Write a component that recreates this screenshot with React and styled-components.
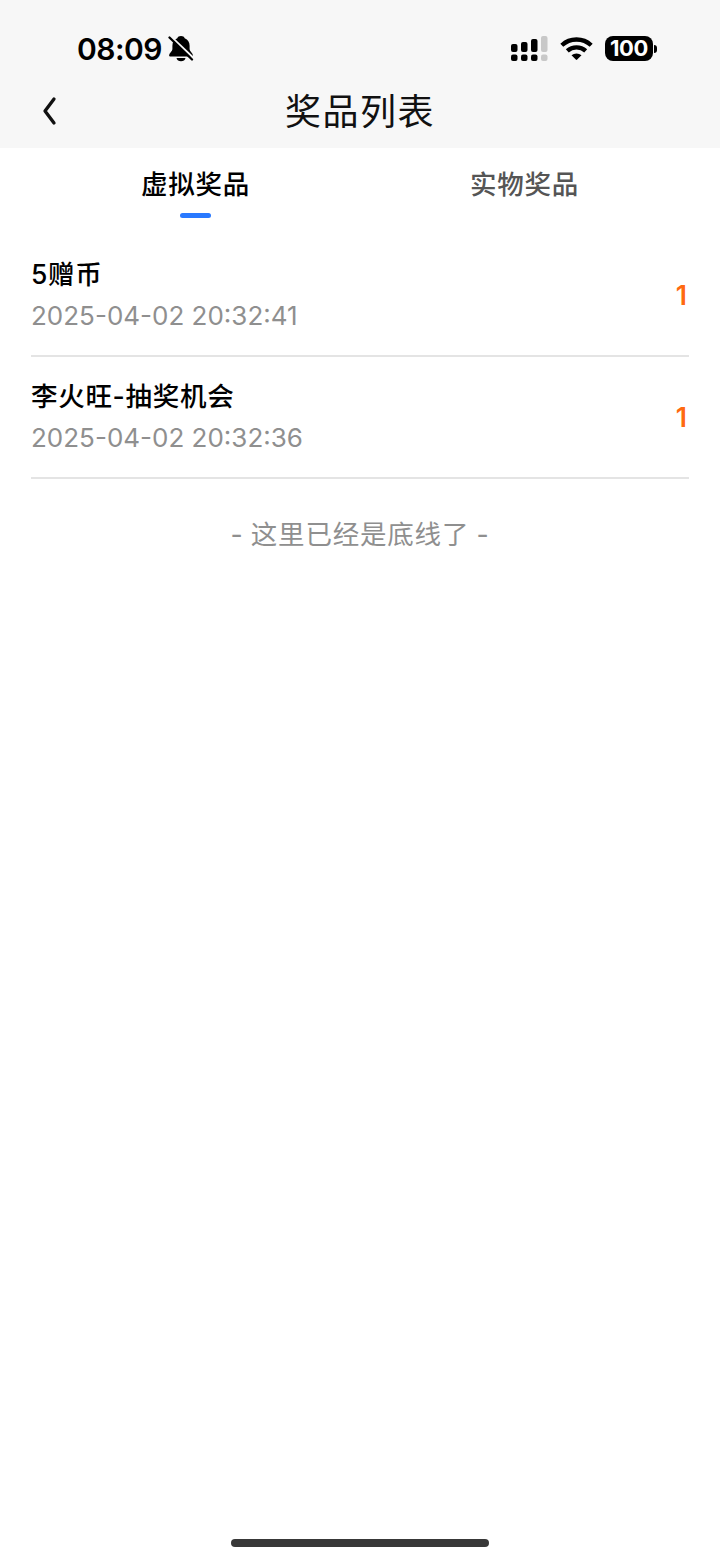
import React, { useState } from 'react';
import styled, { createGlobalStyle } from 'styled-components';

const tabs = ['虚拟奖品', '实物奖品'];

const prizes = [
  { id: 1, name: '5赠币', date: '2025-04-02 20:32:41', count: 1 },
  { id: 2, name: '李火旺-抽奖机会', date: '2025-04-02 20:32:36', count: 1 },
];

const GlobalStyle = createGlobalStyle`
  * {
    box-sizing: border-box;
  }
  body {
    margin: 0;
    background: #fff;
    font-family: Inter, 'Noto Sans CJK SC', sans-serif;
  }
`;

const PageDiv = styled.div`
  width: 100%;
  height: 1561px;
  display: flex;
  flex-direction: column;
  overflow: hidden;
  color: #000;
`;

const HeaderDiv = styled.header`
  height: 148px;
  background: #f7f7f7;
`;

const StatusBarDiv = styled.div`
  height: 75px;
  display: flex;
  align-items: center;
  justify-content: space-between;
  padding: 22px 63px 0 77px;
`;

const StatusGroup = styled.div`
  display: flex;
  align-items: center;
`;

const TimeSpan = styled.span`
  width: 85px;
  font-size: 30px;
  font-weight: 600;
  line-height: 36px;
  letter-spacing: -0.5px;
  white-space: nowrap;
`;

const BellIcon = styled.svg`
  margin-left: 6px;
`;

const WifiIcon = styled.svg`
  margin: 0 12px;
`;

const BatteryDiv = styled.div`
  width: 48px;
  height: 25px;
  border-radius: 8px;
  background: #000;
  color: #fff;
  font-size: 22px;
  font-weight: 700;
  line-height: 25px;
  letter-spacing: -0.4px;
  text-align: center;
`;

const BatteryCap = styled.div`
  width: 3px;
  height: 8px;
  margin-left: 1px;
  border-radius: 0 3px 3px 0;
  background: #000;
`;

const NavDiv = styled.div`
  height: 73px;
  display: grid;
  grid-template-columns: 100px 1fr 100px;
  align-items: center;
`;

const BackButton = styled.button`
  display: flex;
  height: 42px;
  padding: 0 0 2px 40px;
  align-items: center;
  border: none;
  background: none;
  cursor: pointer;
`;

const TitleH1 = styled.h1`
  margin: 0;
  color: #111;
  font-size: 36px;
  font-weight: 400;
  line-height: 72px;
  letter-spacing: 1.5px;
  text-align: center;
`;

const TabsDiv = styled.div`
  height: 87px;
  display: grid;
  grid-template-columns: 1fr 1fr;
  padding: 14px 31px 0;
`;

const TabButton = styled.button`
  display: flex;
  flex-direction: column;
  align-items: center;
  padding: 0;
  border: none;
  background: none;
  color: ${({ $active }) => ($active ? '#000' : '#555')};
  font-family: inherit;
  font-size: 26.5px;
  font-weight: 500;
  line-height: 44px;
  letter-spacing: 0.8px;
  cursor: pointer;
  &::after {
    content: '';
    width: 31px;
    height: 5px;
    margin-top: 7px;
    border-radius: 3px;
    background: ${({ $active }) => ($active ? '#2979ff' : 'transparent')};
  }
`;

const ListUl = styled.ul`
  margin: 0;
  padding: 0 31px;
  list-style: none;
`;

const PrizeLi = styled.li`
  height: 122px;
  display: flex;
  align-items: center;
  justify-content: space-between;
  border-bottom: 2px solid #e4e4e4;
`;

const NameDiv = styled.div`
  height: 41px;
  font-size: 26.5px;
  font-weight: 500;
  line-height: 42px;
  letter-spacing: 0.7px;
`;

const DateDiv = styled.div`
  height: 43px;
  color: #8f8f8f;
  font-size: 26px;
  line-height: 44px;
`;

const CountSpan = styled.span`
  margin-right: 2px;
  color: #ff6a10;
  font-size: 26.5px;
  font-weight: 600;
`;

const EndP = styled.p`
  margin: 34px 0 0;
  color: #8f8f8f;
  font-size: 26.5px;
  line-height: 42px;
  letter-spacing: 0.8px;
  word-spacing: -1px;
  text-align: center;
`;

const HomeBar = styled.div`
  width: 258px;
  height: 8px;
  margin: auto auto 14px;
  border-radius: 4px;
  background: #383838;
`;

const signal = [
  { x: 0, y: 8, h: 8 },
  { x: 10, y: 6, h: 10 },
  { x: 20, y: 3, h: 13 },
  { x: 30, y: 0, h: 16, off: true },
];

const StatusBar = () => (
  <StatusBarDiv>
    <StatusGroup>
      <TimeSpan>08:09</TimeSpan>
      <BellIcon width="26" height="28" viewBox="0 0 26 28">
        <path d="M13 1c2 0 3.200.9 3.700 2.200 3.300 1.200 4.900 4 4.900 7.500v3.600c0 2.200 3.300 4 3.300 5.900 0 .8-.6 1.300-1.500 1.300H2.600c-.9 0-1.500-.5-1.500-1.300 0-1.900 3.300-3.700 3.300-5.900v-3.600c0-3.500 1.600-6.300 4.900-7.500C9.800 1.900 11 1 13 1z" />
        <path d="M8.500 23h9c-.4 2.100-2.200 3.300-4.500 3.300s-4.100-1.200-4.500-3.300z" />
        <path d="M3.200 1.600L26 23.500" stroke="#f7f7f7" strokeWidth="2" />
        <path d="M1.500 2.500L24 24.500" stroke="#000" strokeWidth="2.300" strokeLinecap="round" />
      </BellIcon>
    </StatusGroup>
    <StatusGroup>
      <svg width="37" height="26" viewBox="0 0 37 26">
        {signal.map(({ x, y, h, off }) => (
          <g key={x} fill={off ? '#c8c8c8' : '#000'}>
            <rect x={x} y={y} width="6.500" height={h} rx="2" />
            <rect x={x} y="18.500" width="6.500" height="6.500" rx="2" />
          </g>
        ))}
      </svg>
      <WifiIcon width="33" height="24" viewBox="0 0 33 24">
        <g fill="none" stroke="#000" strokeWidth="4.300">
          <path d="M1.800 8.300a21.500 21.500 0 0 1 29.400 0" />
          <path d="M7.300 13.900a13.500 13.500 0 0 1 18.400 0" />
        </g>
        <path d="M11.500 18.300a7.500 7.500 0 0 1 10 0l-4.300 4.300q-.7.700-1.400 0z" />
      </WifiIcon>
      <BatteryDiv>100</BatteryDiv>
      <BatteryCap />
    </StatusGroup>
  </StatusBarDiv>
);

const App = () => {
  const [active, setActive] = useState(0);

  return (
    <PageDiv>
      <GlobalStyle />
      <HeaderDiv>
        <StatusBar />
        <NavDiv>
          <BackButton aria-label="返回">
            <svg width="18" height="30" viewBox="0 0 18 30">
              <path d="M14 3L5 15L14 27" fill="none" stroke="#111" strokeWidth="3.300" strokeLinecap="round" strokeLinejoin="round" />
            </svg>
          </BackButton>
          <TitleH1>奖品列表</TitleH1>
        </NavDiv>
      </HeaderDiv>
      <TabsDiv>
        {tabs.map((tab, index) => (
          <TabButton key={tab} $active={active === index} onClick={() => setActive(index)}>
            {tab}
          </TabButton>
        ))}
      </TabsDiv>
      <ListUl>
        {prizes.map((prize) => (
          <PrizeLi key={prize.id}>
            <div>
              <NameDiv>{prize.name}</NameDiv>
              <DateDiv>{prize.date}</DateDiv>
            </div>
            <CountSpan>{prize.count}</CountSpan>
          </PrizeLi>
        ))}
      </ListUl>
      <EndP>- 这里已经是底线了 -</EndP>
      <HomeBar />
    </PageDiv>
  );
};

export default App;
